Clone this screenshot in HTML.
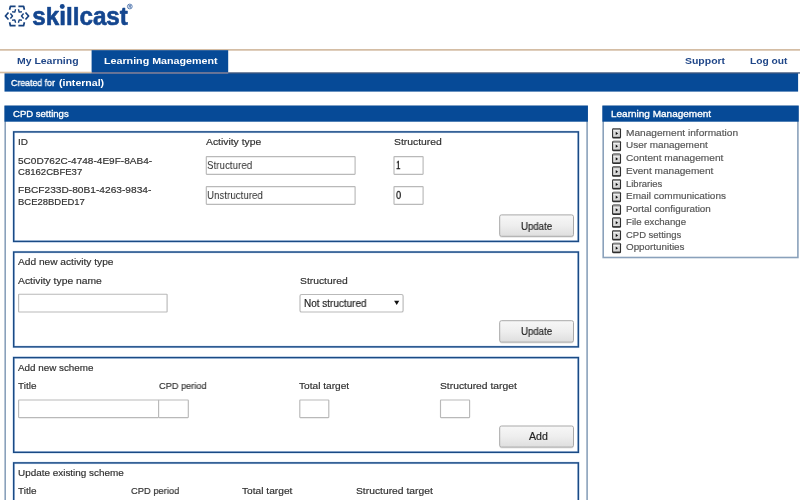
<!DOCTYPE html>
<html>
<head>
<meta charset="utf-8">
<title>Skillcast</title>
<style>
*{box-sizing:border-box;margin:0;padding:0}
html,body{width:800px;height:500px;overflow:hidden;background:#fff}
body{font-family:"Liberation Sans",sans-serif;font-size:10px;color:#222;position:relative}
.abs{position:absolute}
.t{position:absolute;white-space:nowrap;will-change:transform;-webkit-text-stroke:.17px currentColor;line-height:12px;transform-origin:0 50%}
</style>
</head>
<body>
<svg class="abs" style="left:0;top:0;will-change:transform" width="140" height="40" viewBox="0 0 140 40">
  <g fill="none" stroke="#17427f" stroke-linejoin="round" stroke-linecap="butt">
  <path stroke-width="1.7" d="M8.50 12.50 L5.40 16.00 L8.50 19.50 M9.60 9.80 L10.40 6.30 L15.60 6.40 M9.60 22.20 L10.40 25.70 L15.60 25.60 M25.50 12.50 L28.60 16.00 L25.50 19.50 M24.40 9.80 L23.60 6.30 L18.40 6.40 M24.40 22.20 L23.60 25.70 L18.40 25.60"/>
  <path stroke-width="1.4" d="M10.40 13.50 L12.50 16.00 L10.40 18.50 M12.10 11.80 L14.80 12.10 L15.60 9.30 M12.10 20.20 L14.80 19.90 L15.60 22.70 M23.60 13.50 L21.50 16.00 L23.60 18.50 M21.90 11.80 L19.20 12.10 L18.40 9.30 M21.90 20.20 L19.20 19.90 L18.40 22.70"/>
  </g>
  <text x="32.3" y="24.7" font-family="Liberation Sans, sans-serif" font-weight="bold" font-size="25.5" fill="#14468f" stroke="#14468f" stroke-width="0.6" stroke-linejoin="round" textLength="95.6" lengthAdjust="spacingAndGlyphs">skillcast</text>
  <rect x="45.5" y="3" width="14.2" height="3.85" fill="#fff"/>
  <rect x="66" y="3" width="13.5" height="3.85" fill="#fff"/>
  <rect x="59.800" y="3" width="5.8" height="6.4" fill="#fff"/>
  <circle cx="62.25" cy="6.45" r="2.45" fill="#14468f"/>
  <circle cx="129.8" cy="6.500" r="2.4" fill="none" stroke="#3a64a3" stroke-width="0.8"/>
  <text x="128.600" y="8" font-family="Liberation Sans, sans-serif" font-weight="bold" font-size="4" fill="#3a64a3">R</text>
</svg>

<svg class="abs" style="left:0;top:0" width="800" height="500" viewBox="0 0 800 500"><defs><linearGradient id="bg" x1="0" y1="0" x2="0" y2="1"><stop offset="0" stop-color="#f7f7f7"/><stop offset=".5" stop-color="#eeeeee"/><stop offset="1" stop-color="#dedede"/></linearGradient><linearGradient id="ig" x1="0" y1="0" x2="1" y2="1"><stop offset="0" stop-color="#e6e6e6"/><stop offset="1" stop-color="#cfcfcf"/></linearGradient></defs>
<rect x="0" y="49.05" width="800" height="1.65" fill="#d2baa0"/>
<rect x="91.6" y="50.2" width="136.6" height="22.6" fill="#064a97"/>
<rect x="4.5" y="73.2" width="793.6" height="18.4" fill="#064a97"/>
<rect x="0" y="71.7" width="91.6" height="1.6" fill="#d6bea3"/>
<rect x="91.6" y="72.1" width="136.6" height="1.7" fill="#6f7693"/>
<rect x="228.2" y="72.4" width="571.8" height="1.1" fill="#1f3a66"/>
<rect x="5.2" y="106.4" width="581.90" height="413.60" fill="#fff" stroke="#8aa1bb" stroke-width="1.6"/>
<rect x="4.5" y="105.6" width="583.40" height="16.10" fill="#064a97"/>
<rect x="603.2" y="106.4" width="194.70" height="151.10" fill="#fff" stroke="#8aa1bb" stroke-width="1.6"/>
<rect x="602.4" y="105.6" width="196.30" height="16.10" fill="#064a97"/>
<rect x="13.7" y="131.9" width="564.65" height="109.50" fill="#fff" stroke="#9dc0ea" stroke-width="2.4" opacity=".55"/><rect x="13.7" y="131.9" width="564.65" height="109.50" fill="none" stroke="#1a4a84" stroke-width="1.45"/>
<rect x="13.7" y="252.05" width="564.65" height="94.80" fill="#fff" stroke="#9dc0ea" stroke-width="2.4" opacity=".55"/><rect x="13.7" y="252.05" width="564.65" height="94.80" fill="none" stroke="#1a4a84" stroke-width="1.45"/>
<rect x="13.7" y="357.6" width="564.65" height="94.70" fill="#fff" stroke="#9dc0ea" stroke-width="2.4" opacity=".55"/><rect x="13.7" y="357.6" width="564.65" height="94.70" fill="none" stroke="#1a4a84" stroke-width="1.45"/>
<rect x="13.7" y="462.9" width="564.65" height="97.10" fill="#fff" stroke="#9dc0ea" stroke-width="2.4" opacity=".55"/><rect x="13.7" y="462.9" width="564.65" height="97.10" fill="none" stroke="#1a4a84" stroke-width="1.45"/>
<rect x="206.3" y="156.6" width="148.80" height="17.70" rx="0.5" fill="#fff" stroke="#b9b9b9" stroke-width="1.15"/>
<rect x="206.3" y="186.6" width="148.80" height="17.70" rx="0.5" fill="#fff" stroke="#b9b9b9" stroke-width="1.15"/>
<rect x="394" y="156.6" width="29.10" height="17.70" rx="0.5" fill="#fff" stroke="#b9b9b9" stroke-width="1.15"/>
<rect x="394" y="186.6" width="29.10" height="17.70" rx="0.5" fill="#fff" stroke="#b9b9b9" stroke-width="1.15"/>
<rect x="499.5" y="215.3" width="74.20" height="22.40" rx="2" fill="#000" opacity=".10"/><rect x="499.7" y="214.9" width="73.80" height="21.40" rx="1.8" fill="url(#bg)" stroke="#a9a9a9" stroke-width="1"/>
<rect x="18.6" y="294.2" width="148.50" height="17.80" rx="0.5" fill="#fff" stroke="#b9b9b9" stroke-width="1.15"/>
<rect x="300" y="294.5" width="103.10" height="17.50" rx="1.6" fill="#fff" stroke="#b9b9b9" stroke-width="1.15"/><path d="M394.1 300.7 L399.3 300.7 L396.7 305.1 Z" fill="#111"/>
<rect x="499.5" y="321.09999999999997" width="74.20" height="22.40" rx="2" fill="#000" opacity=".10"/><rect x="499.7" y="320.7" width="73.80" height="21.40" rx="1.8" fill="url(#bg)" stroke="#a9a9a9" stroke-width="1"/>
<rect x="18.6" y="400" width="140.00" height="17.60" rx="0.5" fill="#fff" stroke="#b9b9b9" stroke-width="1.15"/>
<rect x="158.6" y="400" width="29.70" height="17.60" rx="0.5" fill="#fff" stroke="#b9b9b9" stroke-width="1.15"/>
<rect x="299.8" y="400" width="29.00" height="17.60" rx="0.5" fill="#fff" stroke="#b9b9b9" stroke-width="1.15"/>
<rect x="440.5" y="400" width="29.10" height="17.60" rx="0.5" fill="#fff" stroke="#b9b9b9" stroke-width="1.15"/>
<rect x="499.5" y="426.4" width="74.20" height="22.10" rx="2" fill="#000" opacity=".10"/><rect x="499.7" y="426.0" width="73.80" height="21.10" rx="1.8" fill="url(#bg)" stroke="#a9a9a9" stroke-width="1"/>
<rect x="612.05" y="128.05" width="9" height="10.4" rx="1.5" fill="#2e2e2e"/><rect x="613" y="128.20" width="7.1" height="2.1" rx=".8" fill="#858585"/><rect x="613.15" y="130.10" width="6.8" height="6.75" fill="url(#ig)"/><rect x="613.15" y="130.10" width="6.8" height=".8" fill="#fff" opacity=".75"/><path d="M615.75 131.85 L618.05 133.45 L615.75 135.05 Z" fill="#0a0a0a"/>
<rect x="612.05" y="140.80" width="9" height="10.4" rx="1.5" fill="#2e2e2e"/><rect x="613" y="140.95" width="7.1" height="2.1" rx=".8" fill="#858585"/><rect x="613.15" y="142.85" width="6.8" height="6.75" fill="url(#ig)"/><rect x="613.15" y="142.85" width="6.8" height=".8" fill="#fff" opacity=".75"/><path d="M615.75 144.60 L618.05 146.20 L615.75 147.80 Z" fill="#0a0a0a"/>
<rect x="612.05" y="153.54" width="9" height="10.4" rx="1.5" fill="#2e2e2e"/><rect x="613" y="153.69" width="7.1" height="2.1" rx=".8" fill="#858585"/><rect x="613.15" y="155.59" width="6.8" height="6.75" fill="url(#ig)"/><rect x="613.15" y="155.59" width="6.8" height=".8" fill="#fff" opacity=".75"/><path d="M615.75 157.34 L618.05 158.94 L615.75 160.54 Z" fill="#0a0a0a"/>
<rect x="612.05" y="166.28" width="9" height="10.4" rx="1.5" fill="#2e2e2e"/><rect x="613" y="166.44" width="7.1" height="2.1" rx=".8" fill="#858585"/><rect x="613.15" y="168.34" width="6.8" height="6.75" fill="url(#ig)"/><rect x="613.15" y="168.34" width="6.8" height=".8" fill="#fff" opacity=".75"/><path d="M615.75 170.09 L618.05 171.69 L615.75 173.28 Z" fill="#0a0a0a"/>
<rect x="612.05" y="179.03" width="9" height="10.4" rx="1.5" fill="#2e2e2e"/><rect x="613" y="179.18" width="7.1" height="2.1" rx=".8" fill="#858585"/><rect x="613.15" y="181.08" width="6.8" height="6.75" fill="url(#ig)"/><rect x="613.15" y="181.08" width="6.8" height=".8" fill="#fff" opacity=".75"/><path d="M615.75 182.83 L618.05 184.43 L615.75 186.03 Z" fill="#0a0a0a"/>
<rect x="612.05" y="191.78" width="9" height="10.4" rx="1.5" fill="#2e2e2e"/><rect x="613" y="191.93" width="7.1" height="2.1" rx=".8" fill="#858585"/><rect x="613.15" y="193.83" width="6.8" height="6.75" fill="url(#ig)"/><rect x="613.15" y="193.83" width="6.8" height=".8" fill="#fff" opacity=".75"/><path d="M615.75 195.58 L618.05 197.18 L615.75 198.78 Z" fill="#0a0a0a"/>
<rect x="612.05" y="204.52" width="9" height="10.4" rx="1.5" fill="#2e2e2e"/><rect x="613" y="204.67" width="7.1" height="2.1" rx=".8" fill="#858585"/><rect x="613.15" y="206.57" width="6.8" height="6.75" fill="url(#ig)"/><rect x="613.15" y="206.57" width="6.8" height=".8" fill="#fff" opacity=".75"/><path d="M615.75 208.32 L618.05 209.92 L615.75 211.52 Z" fill="#0a0a0a"/>
<rect x="612.05" y="217.27" width="9" height="10.4" rx="1.5" fill="#2e2e2e"/><rect x="613" y="217.42" width="7.1" height="2.1" rx=".8" fill="#858585"/><rect x="613.15" y="219.32" width="6.8" height="6.75" fill="url(#ig)"/><rect x="613.15" y="219.32" width="6.8" height=".8" fill="#fff" opacity=".75"/><path d="M615.75 221.07 L618.05 222.67 L615.75 224.27 Z" fill="#0a0a0a"/>
<rect x="612.05" y="230.01" width="9" height="10.4" rx="1.5" fill="#2e2e2e"/><rect x="613" y="230.16" width="7.1" height="2.1" rx=".8" fill="#858585"/><rect x="613.15" y="232.06" width="6.8" height="6.75" fill="url(#ig)"/><rect x="613.15" y="232.06" width="6.8" height=".8" fill="#fff" opacity=".75"/><path d="M615.75 233.81 L618.05 235.41 L615.75 237.01 Z" fill="#0a0a0a"/>
<rect x="612.05" y="242.76" width="9" height="10.4" rx="1.5" fill="#2e2e2e"/><rect x="613" y="242.91" width="7.1" height="2.1" rx=".8" fill="#858585"/><rect x="613.15" y="244.81" width="6.8" height="6.75" fill="url(#ig)"/><rect x="613.15" y="244.81" width="6.8" height=".8" fill="#fff" opacity=".75"/><path d="M615.75 246.56 L618.05 248.16 L615.75 249.76 Z" fill="#0a0a0a"/>
</svg>
<div class="t" style="left:16.80px;top:55.18px;font-size:9.3px;color:#1f4688;transform:scaleX(1.1239);font-weight:bold;-webkit-text-stroke:0">My Learning</div>
<div class="t" style="left:103.60px;top:55.18px;font-size:9.3px;color:#fff;transform:scaleX(1.1505);font-weight:bold;-webkit-text-stroke:0">Learning Management</div>
<div class="t" style="left:685.00px;top:55.18px;font-size:9.3px;color:#1f4688;transform:scaleX(1.1257);font-weight:bold;-webkit-text-stroke:0">Support</div>
<div class="t" style="left:749.60px;top:55.18px;font-size:9.3px;color:#1f4688;transform:scaleX(1.1007);font-weight:bold;-webkit-text-stroke:0">Log out</div>
<div class="t" style="left:10.50px;top:77.11px;font-size:9.2px;color:#fff;transform:scaleX(0.9542);-webkit-text-stroke:.32px #fff">Created for</div>
<div class="t" style="left:58.50px;top:77.11px;font-size:9.2px;color:#fff;transform:scaleX(1.1467);font-weight:bold;-webkit-text-stroke:0">(internal)</div>
<div class="t" style="left:13.00px;top:108.04px;font-size:9.4px;color:#fff;transform:scaleX(1.0178);-webkit-text-stroke:.32px #fff">CPD settings</div>
<div class="t" style="left:610.50px;top:108.04px;font-size:9.4px;color:#fff;transform:scaleX(1.0668);-webkit-text-stroke:.32px #fff">Learning Management</div>
<div class="t" style="left:18.40px;top:135.74px;font-size:9.4px;color:#303030;transform:scaleX(1.0620)">ID</div>
<div class="t" style="left:206.00px;top:135.74px;font-size:9.4px;color:#303030;transform:scaleX(1.1044)">Activity type</div>
<div class="t" style="left:394.00px;top:135.74px;font-size:9.4px;color:#303030;transform:scaleX(1.1061)">Structured</div>
<div class="t" style="left:18.40px;top:154.74px;font-size:9.4px;color:#303030;transform:scaleX(1.0725)">5C0D762C-4748-4E9F-8AB4-</div>
<div class="t" style="left:18.40px;top:165.74px;font-size:9.4px;color:#303030;transform:scaleX(1.0184)">C8162CBFE37</div>
<div class="t" style="left:18.40px;top:184.34px;font-size:9.4px;color:#303030;transform:scaleX(1.0842)">FBCF233D-80B1-4263-9834-</div>
<div class="t" style="left:18.40px;top:195.74px;font-size:9.4px;color:#303030;transform:scaleX(1.0096)">BCE28BDED17</div>
<div class="t" style="left:207.20px;top:159.25px;font-size:11.4px;color:#2e2e2e;transform:scaleX(0.8599);-webkit-text-stroke:0">Structured</div>
<div class="t" style="left:207.20px;top:189.05px;font-size:11.4px;color:#2e2e2e;transform:scaleX(0.8571);-webkit-text-stroke:0">Unstructured</div>
<div class="t" style="left:396.00px;top:159.25px;font-size:11.39px;color:#222;transform:scaleX(0.7167);-webkit-text-stroke:.3px currentColor">1</div>
<div class="t" style="left:395.70px;top:189.05px;font-size:11.39px;color:#222;transform:scaleX(0.8167);-webkit-text-stroke:.3px currentColor">0</div>
<div class="t" style="left:520.80px;top:220.53px;font-size:10px;color:#222;transform:scaleX(0.9638)">Update</div>
<div class="t" style="left:18.40px;top:256.14px;font-size:9.4px;color:#303030;transform:scaleX(1.0837)">Add new activity type</div>
<div class="t" style="left:18.40px;top:274.74px;font-size:9.4px;color:#303030;transform:scaleX(1.1021)">Activity type name</div>
<div class="t" style="left:299.60px;top:274.74px;font-size:9.4px;color:#303030;transform:scaleX(1.1014)">Structured</div>
<div class="t" style="left:303.50px;top:297.54px;font-size:10px;color:#222;transform:scaleX(0.9945)">Not structured</div>
<div class="t" style="left:520.80px;top:326.34px;font-size:10px;color:#222;transform:scaleX(0.9638)">Update</div>
<div class="t" style="left:18.40px;top:361.74px;font-size:9.4px;color:#303030;transform:scaleX(1.0488)">Add new scheme</div>
<div class="t" style="left:18.40px;top:380.34px;font-size:9.4px;color:#303030;transform:scaleX(1.0613)">Title</div>
<div class="t" style="left:159.00px;top:380.34px;font-size:9.4px;color:#303030;transform:scaleX(0.9825)">CPD period</div>
<div class="t" style="left:299.40px;top:380.34px;font-size:9.4px;color:#303030;transform:scaleX(1.0818)">Total target</div>
<div class="t" style="left:440.30px;top:380.34px;font-size:9.4px;color:#303030;transform:scaleX(1.0994)">Structured target</div>
<div class="t" style="left:528.50px;top:431.34px;font-size:10px;color:#222;transform:scaleX(1.0562)">Add</div>
<div class="t" style="left:18.40px;top:466.74px;font-size:9.4px;color:#303030;transform:scaleX(1.0577)">Update existing scheme</div>
<div class="t" style="left:18.40px;top:485.44px;font-size:9.4px;color:#303030;transform:scaleX(1.0613)">Title</div>
<div class="t" style="left:130.50px;top:485.44px;font-size:9.4px;color:#303030;transform:scaleX(0.9949)">CPD period</div>
<div class="t" style="left:242.40px;top:485.44px;font-size:9.4px;color:#303030;transform:scaleX(1.0861)">Total target</div>
<div class="t" style="left:356.00px;top:485.44px;font-size:9.4px;color:#303030;transform:scaleX(1.0994)">Structured target</div>
<div class="t" style="left:626.20px;top:126.64px;font-size:9.4px;color:#555;transform:scaleX(1.0803)">Management information</div>
<div class="t" style="left:626.20px;top:139.39px;font-size:9.4px;color:#555;transform:scaleX(1.0592)">User management</div>
<div class="t" style="left:626.20px;top:152.13px;font-size:9.4px;color:#555;transform:scaleX(1.0800)">Content management</div>
<div class="t" style="left:626.20px;top:164.88px;font-size:9.4px;color:#555;transform:scaleX(1.0747)">Event management</div>
<div class="t" style="left:626.20px;top:177.62px;font-size:9.4px;color:#555;transform:scaleX(1.0092)">Libraries</div>
<div class="t" style="left:626.20px;top:190.37px;font-size:9.4px;color:#555;transform:scaleX(1.0659)">Email communications</div>
<div class="t" style="left:626.20px;top:203.11px;font-size:9.4px;color:#555;transform:scaleX(1.0501)">Portal configuration</div>
<div class="t" style="left:626.20px;top:215.86px;font-size:9.4px;color:#555;transform:scaleX(1.0283)">File exchange</div>
<div class="t" style="left:626.20px;top:228.60px;font-size:9.4px;color:#555;transform:scaleX(1.0087)">CPD settings</div>
<div class="t" style="left:626.20px;top:241.35px;font-size:9.4px;color:#555;transform:scaleX(1.0486)">Opportunities</div>
</body>
</html>
